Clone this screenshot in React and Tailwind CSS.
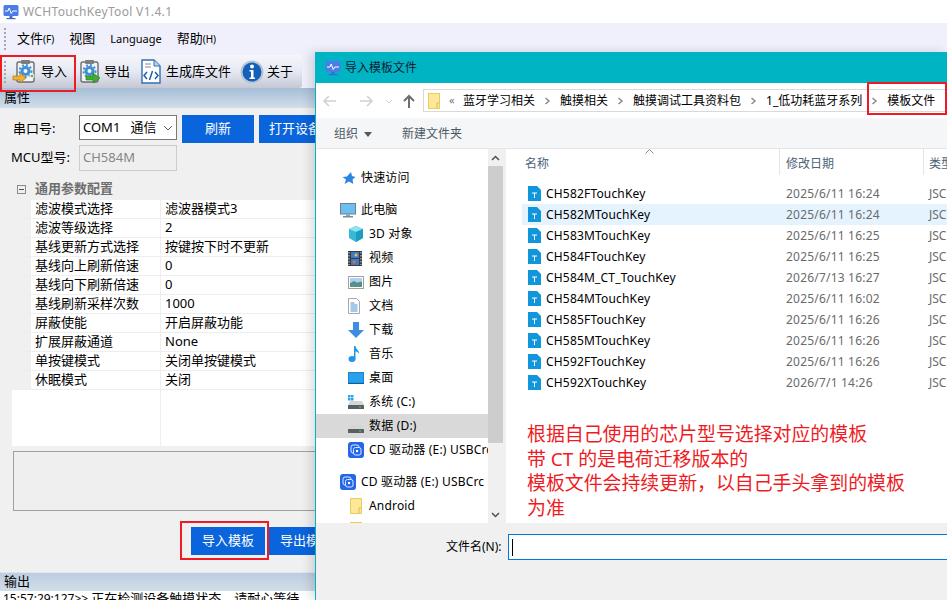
const AppIcon = ({ s = 16 }) => (
  <svg width={s} height={s} viewBox="0 0 16 16" className="shrink-0">
    <rect x="0.5" y="1" width="15" height="11" rx="1.5" fill="#4a7de8" />
    <path d="M2 7h3l1.2-3 2 5.5L9.8 7H14" fill="none" stroke="#fff" strokeWidth="1" />
    <rect x="6.5" y="12" width="3" height="2" fill="#3b6bd0" />
    <rect x="3.5" y="14" width="9" height="1.2" fill="#3b6bd0" />
  </svg>
);
const Gear = ({ x, y }) => (
  <g transform={`translate(${x} ${y})`}>
    <circle r="5" fill="#3f8fd8" />
    <circle r="6" fill="none" stroke="#3f8fd8" strokeWidth="2" strokeDasharray="2 2" />
    <circle r="2" fill="#fff" />
  </g>
);
const Clipboard = () => (
  <>
    <rect x="5" y="3" width="17" height="20" rx="2" fill="#f3f3f3" stroke="#6d6d6d" strokeWidth="1.4" />
    <rect x="9" y="1" width="9" height="4" rx="1" fill="#7d7d7d" />
    <Gear x={13.5} y={12} />
  </>
);
const ImportIcon = () => (
  <svg width="25" height="25" viewBox="0 0 25 25" className="shrink-0">
    <Clipboard />
    <circle cx="20" cy="17" r="2" fill="#5cb85c" stroke="#fff" />
    <path d="M1 17h7v-3l6 5-6 5v-3H1z" fill="#f2b230" stroke="#9a6f14" strokeWidth="0.6" />
  </svg>
);
const ExportIcon = () => (
  <svg width="25" height="25" viewBox="0 0 25 25" className="shrink-0">
    <Clipboard />
    <path d="M10 17h7v-3l7 5-7 5v-3h-7z" fill="#3fae2f" stroke="#1f7a18" strokeWidth="0.6" />
  </svg>
);
const CodeIcon = () => (
  <svg width="24" height="25" viewBox="0 0 24 25" className="shrink-0">
    <path d="M3 1h12l6 6v17H3z" fill="#fff" stroke="#2f6fb5" strokeWidth="1.4" />
    <path d="M15 1v6h6" fill="#bcd6ee" stroke="#2f6fb5" />
    <path d="M6 5h6M6 8h6" stroke="#8a8a8a" />
    <path d="M8 13l-3 3.5 3 3.5M16 13l3 3.5-3 3.5M13.5 12l-3 9" fill="none" stroke="#1e5fa8" strokeWidth="1.5" />
  </svg>
);
const InfoIcon = () => (
  <svg width="24" height="24" viewBox="0 0 24 24" className="shrink-0">
    <circle cx="12" cy="12" r="11.5" fill="#b9c6d3" />
    <circle cx="12" cy="12" r="9.5" fill="#1560b8" />
    <circle cx="12" cy="6.5" r="2" fill="#fff" />
    <path d="M9.5 10h4v7.5h1.5V19H9.5v-1.5H11V11.5H9.5z" fill="#fff" />
  </svg>
);
const Star = () => (
  <svg width="14" height="14" viewBox="0 0 14 14">
    <path d="M9 1l1 4 3.5 1-3 2.5.8 4.5L7 10.500 2.500 13 4 8.500 .5 6 5 5.500z" fill="#2b86e0" />
  </svg>
);
const Monitor = () => (
  <svg width="16" height="15" viewBox="0 0 16 15">
    <rect x="0.500" y="0.500" width="15" height="10.500" fill="#6ebff0" stroke="#6a7f92" />
    <rect x="6" y="11" width="4" height="2" fill="#9aa8b4" />
    <rect x="3" y="13" width="10" height="1.500" fill="#7a8b9a" />
  </svg>
);
const Cube = () => (
  <svg width="16" height="16" viewBox="0 0 16 16">
    <path d="M8 0l7 3v9l-7 4-7-4V3z" fill="#37b8d8" />
    <path d="M8 0l7 3-7 3-7-3z" fill="#8de3ee" />
    <path d="M8 6l7-3v9l-7 4z" fill="#1d9dc0" />
  </svg>
);
const Film = () => (
  <svg width="14" height="15" viewBox="0 0 14 15">
    <rect width="14" height="15" fill="#3a3a3a" />
    <path d="M1 1v13M13 1v13" stroke="#ddd" strokeWidth="1" strokeDasharray="1.500 1.500" />
    <rect x="3" y="1" width="8" height="6" fill="#3d79cc" />
    <rect x="3" y="8" width="8" height="6" fill="#3d79cc" />
    <circle cx="8" cy="4" r="1.500" fill="#e9c13a" />
    <circle cx="6" cy="11" r="1.500" fill="#d8742b" />
  </svg>
);
const Picture = () => (
  <svg width="16" height="13" viewBox="0 0 16 13">
    <rect x="0.500" y="0.500" width="15" height="12" fill="#fff" stroke="#a0a0a0" />
    <rect x="2" y="2" width="12" height="4.500" fill="#a9d3ee" />
    <path d="M2 7l4-2 3 1.500 5-1V11H2z" fill="#5b8d8a" />
  </svg>
);
const DocIcon = () => (
  <svg width="12" height="16" viewBox="0 0 12 16">
    <path d="M.5.5h8l3 3v12H.5z" fill="#fff" stroke="#a8a8a8" />
    <path d="M2.500 5h4M2.500 7h7M2.500 9h7M2.500 11h7M2.500 13h7" stroke="#4d92d6" />
  </svg>
);
const Down = () => (
  <svg width="16" height="16" viewBox="0 0 16 16"><path d="M5 0h6v8h5l-8 8-8-8h5z" fill="#3d8ee0" /></svg>
);
const Note = () => (
  <svg width="12" height="16" viewBox="0 0 12 16">
    <ellipse cx="4" cy="13" rx="3.500" ry="3" fill="#2196e8" />
    <path d="M6 0h1.500c0 3 4 4 3.500 8C10 6 8.500 5.500 7.500 5.500V13H6z" fill="#2196e8" />
  </svg>
);
const Desk = () => (
  <svg width="16" height="12" viewBox="0 0 16 12">
    <rect width="16" height="12" fill="#1687d9" />
    <rect y="11" width="16" height="1" fill="#0a5f9f" />
    <rect x="1" y="1" width="14" height="9.500" fill="#2aa0ea" />
  </svg>
);
const Drive = ({ win }) => (
  <svg width="16" height="14" viewBox="0 0 16 14">
    {win && <path d="M0 0h2.500v2.500H0zM3 0h2.500v2.500H3zM0 3h2.500v2.500H0zM3 3h2.500v2.500H3z" fill="#2aa3e8" />}
    <path d="M2 6h12l2 4H0z" fill="#d4d6d8" />
    <rect y="10" width="16" height="4" rx="0.500" fill="#5a5f63" />
    <rect x="11" y="11.500" width="2" height="1" fill="#3fe04a" />
  </svg>
);
const Cd = () => (
  <svg width="16" height="16" viewBox="0 0 16 16">
    <rect width="16" height="16" rx="3" fill="#2566e8" />
    <rect x="3" y="3" width="8" height="8" rx="2" fill="none" stroke="#dbe7ff" strokeWidth="1" />
    <rect x="5.500" y="5.500" width="7.500" height="7.500" rx="2" fill="#2566e8" stroke="#dbe7ff" />
    <circle cx="9" cy="9" r="1.200" fill="#fff" />
  </svg>
);
const Folder = ({ s = 16 }) => (
  <svg width={s - 4} height={s} viewBox="0 0 12 16" className="shrink-0">
    <rect x="0.500" y="0.500" width="11" height="15" fill="#fde89a" stroke="#eccb62" />
    <path d="M9 15.500V10h2.500" fill="#fde89a" stroke="#e3bb4a" />
  </svg>
);
const FileT = () => (
  <svg width="14" height="15" viewBox="0 0 14 15" className="shrink-0">
    <path d="M1 0h9l4 4v11H1z" fill="#1296db" />
    <path d="M5 7h5M7.500 7v5" stroke="#fff" />
  </svg>
);
const Grip = () => (
  <div className="flex flex-col gap-[2px] w-[2px] shrink-0">
    {[0, 1, 2, 3, 4, 5].map((i) => <div key={i} className="size-[2px] bg-[#a6a6a6]" />)}
  </div>
);
const Chev = () => (
  <svg width="25" height="10" viewBox="0 0 25 10" className="shrink-0">
    <path d="M10.500 2l3.500 3-3.500 3" fill="none" stroke="#8a8a8a" strokeWidth="1.500" />
  </svg>
);
const ToolBtn = ({ icon, label, cls }) => (
  <div className={`flex items-center gap-[3px] ${cls}`}>
    {icon}
    <span>{label}</span>
  </div>
);

const rows = [
  ['滤波模式选择', '滤波器模式3'],
  ['滤波等级选择', '2'],
  ['基线更新方式选择', '按键按下时不更新'],
  ['基线向上刷新倍速', '0'],
  ['基线向下刷新倍速', '0'],
  ['基线刷新采样次数', '1000'],
  ['屏蔽使能', '开启屏蔽功能'],
  ['扩展屏蔽通道', 'None'],
  ['单按键模式', '关闭单按键模式'],
  ['休眠模式', '关闭'],
];
const files = [
  ['CH582FTouchKey', '2025/6/11 16:24'],
  ['CH582MTouchKey', '2025/6/11 16:24'],
  ['CH583MTouchKey', '2025/6/11 16:25'],
  ['CH584FTouchKey', '2025/6/11 16:25'],
  ['CH584M_CT_TouchKey', '2026/7/13 16:27'],
  ['CH584MTouchKey', '2025/6/11 16:02'],
  ['CH585FTouchKey', '2025/6/11 16:26'],
  ['CH585MTouchKey', '2025/6/11 16:26'],
  ['CH592FTouchKey', '2025/6/11 16:26'],
  ['CH592XTouchKey', '2026/7/1 14:26'],
];
const navTree = [
  [<Monitor />, '此电脑', 'pl-[24px] mt-[8px]', 'w-[21px]'],
  [<Cube />, '3D 对象', 'pl-[32px]', 'w-[21px]'],
  [<Film />, '视频', 'pl-[32px]', 'w-[21px]'],
  [<Picture />, '图片', 'pl-[32px]', 'w-[21px]'],
  [<DocIcon />, '文档', 'pl-[32px]', 'w-[21px]'],
  [<Down />, '下载', 'pl-[32px]', 'w-[21px]'],
  [<Note />, '音乐', 'pl-[32px]', 'w-[21px]'],
  [<Desk />, '桌面', 'pl-[32px]', 'w-[21px]'],
  [<Drive win />, '系统 (C:)', 'pl-[32px]', 'w-[21px]'],
  [<Drive />, '数据 (D:)', 'pl-[32px] bg-[#d9d9d9]', 'w-[21px]'],
  [<Cd />, 'CD 驱动器 (E:) USBCrc', 'pl-[32px]', 'w-[21px]'],
  [<Cd />, 'CD 驱动器 (E:) USBCrc', 'pl-[24px] mt-[8px]', 'w-[21px]'],
  [<Folder />, 'Android', 'pl-[34px]', 'w-[19px]'],
  [<Folder />, '', 'pl-[34px]', 'w-[19px]'],
];

export default function App() {
  return (
    <div className="relative w-[947px] h-[600px] overflow-hidden bg-[#f0f0f0] text-[13px] text-black font-['Noto_Sans','Noto_Sans_CJK_SC',sans-serif]">
      {/* main window */}
      <div className="flex flex-col h-full">
        <div className="h-[23px] bg-white flex items-center gap-[4px] pl-[3px] text-[12px] tracking-[0.33px] text-[#9a9a9a]">
          <AppIcon />
          <span>WCHTouchKeyTool V1.4.1</span>
        </div>
        <div className="h-[32px] bg-[#eff0fb] flex items-center pl-[4px]">
          <Grip />
          <span className="ml-[11px]">文件<span className="text-[10px]">(F)</span></span>
          <span className="ml-[15px]">视图</span>
          <span className="ml-[15px] text-[11px]">Language</span>
          <span className="ml-[15px]">帮助<span className="text-[10px]">(H)</span></span>
        </div>
        <div className="h-[33px] bg-[#eff0fb] flex">
          <div className="w-[302px] rounded-r-[3px] bg-gradient-to-b from-[#f5f6fb] via-[#e7e9f2] to-[#c5c8d4] flex items-center pl-[4px]">
            <Grip />
            <ToolBtn cls="ml-[6px] w-[64px] [&>span]:ml-px" icon={<ImportIcon />} label="导入" />
            <ToolBtn cls="w-[63px]" icon={<ExportIcon />} label="导出" />
            <ToolBtn cls="w-[101px]" icon={<CodeIcon />} label="生成库文件" />
            <ToolBtn cls="" icon={<InfoIcon />} label="关于" />
          </div>
        </div>
        <div className="h-[20px] bg-gradient-to-b from-[#a6bed7] to-[#d2deeb] flex items-center pl-[4px]">属性</div>
        <div className="flex-1 flex flex-col min-h-0">
          <div className="pl-[12px] pt-[7px] flex items-start h-[37px]">
            <span className="w-[67px] leading-[26px] pl-[1px]">串口号:</span>
            <div className="w-[98px] h-[25px] border border-[#7a7a7a] bg-white flex items-center justify-between pl-[3px] pr-[3px]">
              <span className="whitespace-nowrap">COM1&nbsp;&nbsp;&nbsp;通信</span>
              <svg width="10" height="6" viewBox="0 0 10 6" className="shrink-0"><path d="M1 1l4 4 4-4" fill="none" stroke="#606060" /></svg>
            </div>
            <div className="ml-[5px] w-[72px] h-[28px] bg-[#0a64dc] text-white flex items-center justify-center">刷新</div>
            <div className="ml-[5px] w-[72px] h-[28px] bg-[#0a64dc] text-white flex items-center justify-center whitespace-nowrap">打开设备</div>
          </div>
          <div className="pl-[11px] flex items-center h-[26px]">
            <span className="w-[68px]">MCU型号:</span>
            <div className="w-[98px] h-[26px] border border-[#cccccc] bg-[#efefef] text-[#868686] flex items-center pl-[3px]">CH584M</div>
          </div>
          <div className="h-[29px] flex items-center pl-[17px] pt-[7px] text-[#6d6d6d] font-semibold">
            <span className="size-[9px] border border-[#8a8a8a] flex items-center justify-center mr-[9px]"><span className="w-[5px] h-px bg-[#555]" /></span>
            通用参数配置
          </div>
          <div className="ml-[12px] bg-white flex flex-col w-[320px] h-[246px]">
            {rows.map(([a, b]) => (
              <div key={a} className="flex h-[19px] border-b border-[#eeeeee] leading-[16px]">
                <div className="w-[19px] bg-[#f0f0f0]" />
                <div className="w-[130px] pl-[4px] border-r border-[#eeeeee]">{a}</div>
                <div className="pl-[4px]">{b}</div>
              </div>
            ))}
            <div className="flex-1 flex">
              <div className="w-[149px] border-r border-[#eeeeee]" />
            </div>
          </div>
          <div className="ml-[13px] mt-[5px] w-[320px] h-[60px] border border-[#a0a0a0] bg-[#efefef]" />
          <div className="h-[61px] flex items-start pl-[191px] pt-[16px]">
            <div className="w-[74px] h-[28px] bg-[#0a64dc] text-white flex items-center justify-center">导入模板</div>
            <div className="ml-[4px] w-[74px] h-[28px] bg-[#0a64dc] text-white flex items-center justify-center whitespace-nowrap">导出模板</div>
          </div>
          <div className="h-[19px] bg-gradient-to-b from-[#bccde0] to-[#d2dde9] border-t border-[#e2e4f6] flex items-center pl-[4px]">输出</div>
          <div className="h-[9px] bg-white overflow-hidden whitespace-nowrap pl-[3px] leading-[14px] text-[12px]">
            15:57:29:127&gt;&gt; <span className="text-[13px]">正在检测设备触摸状态，请耐心等待</span>
          </div>
        </div>
      </div>

      {/* annotations on the main window */}
      <div className="absolute left-0 top-[55px] w-[76px] h-[37px] border-2 border-[#ed1c24]" />
      <div className="absolute left-[180px] top-[521px] w-[89px] h-[39px] border-2 border-[#ed1c24]" />

      {/* file dialog */}
      <div className="absolute left-[315px] top-[52px] w-[632px] h-[548px] bg-white border-l border-[#00b4c3] shadow-[-4px_0_10px_rgba(0,0,0,0.14)] flex flex-col text-[12px]">
        <div className="h-[31px] bg-[#00b4c3] flex items-center gap-[4px] pl-[9px] shrink-0">
          <AppIcon s={16} />
          <span className="text-[#123]">导入模板文件</span>
        </div>
        <div className="h-[35px] flex items-center shrink-0 relative">
          <svg width="96" height="16" viewBox="0 0 96 16" className="ml-[6px] shrink-0">
            <path d="M14 8H2M7 3L2 8l5 5" fill="none" stroke="#d0d0d0" strokeWidth="1.500" />
            <path d="M38 8h12M45 3l5 5-5 5" fill="none" stroke="#d0d0d0" strokeWidth="1.500" />
            <path d="M64 7l3 3 3-3" fill="none" stroke="#d0d0d0" />
            <path d="M87 15V3M82 8l5-5 5 5" fill="none" stroke="#6f6f6f" strokeWidth="2" />
          </svg>
          <div className="ml-[5px] flex-1 h-[23px] border border-[#d9d9d9] border-r-0 flex items-center pl-[4px] whitespace-nowrap">
            <Folder s={16} />
            <span className="ml-[9px] w-[15px] text-[#777] text-[11px]">«</span>
            <span className="ml-[-1px]">蓝牙学习相关</span>
            <Chev />
            <span>触摸相关</span>
            <Chev />
            <span>触摸调试工具资料包</span>
            <Chev />
            <span>1_低功耗蓝牙系列</span>
            <Chev />
            <span>模板文件</span>
          </div>
          <div className="absolute right-0 top-[-1px] w-[80px] h-[33px] border-2 border-[#ed1c24]" />
        </div>
        <div className="h-[31px] bg-[#f5f6f7] border-b border-[#e3e5e8] flex items-center pl-[18px] pt-[2px] text-[#4d5a66] shrink-0">
          <span>组织</span>
          <svg width="8" height="5" viewBox="0 0 8 5" className="ml-[6px]"><path d="M0 0h8L4 5z" fill="#4d5a66" /></svg>
          <span className="ml-[30px]">新建文件夹</span>
        </div>
        <div className="flex-1 min-h-0 flex">
          {/* navigation tree */}
          <div className="w-[172px] shrink-0 overflow-hidden pt-[17px] flex flex-col whitespace-nowrap tracking-[0.18px]">
            <div className="h-[24px] shrink-0 flex items-center pl-[26px]">
              <span className="w-[19px]"><Star /></span>快速访问
            </div>
            {navTree.map(([icon, label, cls, w], i) => (
              <div key={i} className={`h-[24px] shrink-0 flex items-center overflow-hidden ${cls}`}>
                <span className={`${w} shrink-0 flex items-center`}>{icon}</span>
                {label}
              </div>
            ))}
          </div>
          {/* scrollbar */}
          <div className="w-[15px] shrink-0 bg-[#f0f0f0] flex flex-col">
            <div className="h-[17px] flex items-center justify-center">
              <svg width="9" height="6" viewBox="0 0 9 6"><path d="M1 5l3.500-3.500L8 5" fill="none" stroke="#505050" strokeWidth="1.500" /></svg>
            </div>
            <div className="h-[277px] bg-[#cdcdcd]" />
            <div className="flex-1" />
            <div className="h-[17px] flex items-center justify-center">
              <svg width="9" height="6" viewBox="0 0 9 6"><path d="M1 1l3.500 3.500L8 1" fill="none" stroke="#505050" strokeWidth="1.500" /></svg>
            </div>
          </div>
          <div className="w-[3px] shrink-0 bg-[#f0f0f0]" />
          {/* file list */}
          <div className="flex-1 min-w-0 flex flex-col overflow-hidden">
            <div className="h-[26px] flex items-center whitespace-nowrap text-[#4d6378] relative shrink-0">
              <span className="w-[274px] shrink-0 pl-[19px] pt-[3px] self-stretch flex items-center border-r border-[#e5e5e5]">名称</span>
              <span className="w-[144px] shrink-0 pl-[6px] pt-[3px] self-stretch flex items-center border-r border-[#e5e5e5]">修改日期</span>
              <span className="pl-[5px] pt-[3px] shrink-0">类型</span>
              <svg width="9" height="5" viewBox="0 0 9 5" className="absolute left-[139px] top-0"><path d="M.5 4.500L4.500.5l4 4" fill="none" stroke="#8a8a8a" /></svg>
            </div>
            <div className="pt-[8px] flex flex-col">
              {files.map(([n, d]) => (
                <div key={n} className={`h-[21px] flex items-center whitespace-nowrap ml-[16px] ${n === 'CH582MTouchKey' ? 'bg-[#e5f3ff]' : ''}`}>
                  <div className="w-[24px] pl-[5px] shrink-0"><FileT /></div>
                  <span className="w-[240px] shrink-0 tracking-[0.18px]">{n}</span>
                  <span className="w-[143px] shrink-0 text-[#6b6b6b] tracking-[0.2px]">{d}</span>
                  <span className="text-[#6b6b6b]">JSC</span>
                </div>
              ))}
            </div>
            <p className="mt-[29px] ml-[21px] w-[384px] text-[18.9px] leading-[24.500px] text-[#ed1c24]">
              根据自己使用的芯片型号选择对应的模板<br />
              带 CT 的是电荷迁移版本的<br />
              模板文件会持续更新，以自己手头拿到的模板为准
            </p>
          </div>
        </div>
        <div className="h-[77px] bg-[#f0f0f0] shrink-0 flex items-start pt-[11px] pl-[130px]">
          <span className="w-[62px] leading-[26px] whitespace-nowrap">文件名(N):</span>
          <div className="flex-1 h-[26px] border border-[#0078d7] border-r-0 bg-white flex items-center pl-[3px]">
            <div className="w-px h-[17px] bg-black" />
          </div>
        </div>
      </div>
    </div>
  );
}
